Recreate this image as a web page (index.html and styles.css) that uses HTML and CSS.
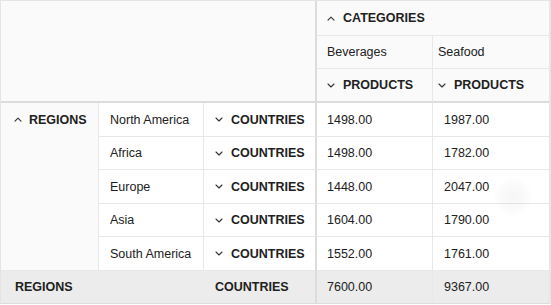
FILE: index.html
```html
<!DOCTYPE html>
<html lang="en">
<head>
<meta charset="utf-8">
<title>Pivot Grid</title>
<link rel="stylesheet" href="styles.css">
</head>
<body>
<div class="pivot">
  <div class="cell corner"></div>
  <div class="cell hdr bold c4 span2"><svg class="chev" viewBox="0 0 8 5"><polyline points="1,4.2 4,1.2 7,4.2"/></svg>CATEGORIES</div>
  <div class="cell hdr c4">Beverages</div>
  <div class="cell hdr c5">Seafood</div>
  <div class="cell hdr bold c4 thick-b"><svg class="chev" viewBox="0 0 8 5"><polyline points="1,1 4,4 7,1"/></svg>PRODUCTS</div>
  <div class="cell hdr bold c5 thick-b"><svg class="chev" viewBox="0 0 8 5"><polyline points="1,1 4,4 7,1"/></svg>PRODUCTS</div>

  <div class="cell rowhdr bold regions"><span class="rh-line"><svg class="chev" viewBox="0 0 8 5"><polyline points="1,4.2 4,1.2 7,4.2"/></svg>REGIONS</span></div>

  <div class="cell c2">North America</div>
  <div class="cell c3 bold thick-r"><svg class="chev" viewBox="0 0 8 5"><polyline points="1,1 4,4 7,1"/></svg>COUNTRIES</div>
  <div class="cell c4">1498.00</div>
  <div class="cell c5d">1987.00</div>

  <div class="cell c2">Africa</div>
  <div class="cell c3 bold thick-r"><svg class="chev" viewBox="0 0 8 5"><polyline points="1,1 4,4 7,1"/></svg>COUNTRIES</div>
  <div class="cell c4">1498.00</div>
  <div class="cell c5d">1782.00</div>

  <div class="cell c2">Europe</div>
  <div class="cell c3 bold thick-r"><svg class="chev" viewBox="0 0 8 5"><polyline points="1,1 4,4 7,1"/></svg>COUNTRIES</div>
  <div class="cell c4">1448.00</div>
  <div class="cell c5d">2047.00</div>

  <div class="cell c2">Asia</div>
  <div class="cell c3 bold thick-r"><svg class="chev" viewBox="0 0 8 5"><polyline points="1,1 4,4 7,1"/></svg>COUNTRIES</div>
  <div class="cell c4">1604.00</div>
  <div class="cell c5d">1790.00</div>

  <div class="cell c2">South America</div>
  <div class="cell c3 bold thick-r"><svg class="chev" viewBox="0 0 8 5"><polyline points="1,1 4,4 7,1"/></svg>COUNTRIES</div>
  <div class="cell c4">1552.00</div>
  <div class="cell c5d">1761.00</div>

  <div class="cell total bold span2 tot1">REGIONS</div>
  <div class="cell total bold c3 thick-r">COUNTRIES</div>
  <div class="cell total c4">7600.00</div>
  <div class="cell total c5d">9367.00</div>

  <div class="ripple"></div>
</div>
</body>
</html>
```

FILE: styles.css
```css
* { box-sizing: border-box; }

html, body {
  margin: 0;
  padding: 0;
  background: #ffffff;
}

body {
  font-family: "Liberation Sans", Arial, Helvetica, sans-serif;
  font-size: 12.5px;
  color: #212121;
}

.pivot {
  position: relative;
  width: 551px;
  display: grid;
  grid-template-columns: 98px 105px 113px 116px 116px;
  grid-template-rows: 35px 33px 34px 34px 33px 34px 33px 34px 33px;
  border-top: 1px solid #e4e4e4;
  border-left: 1px solid #e4e4e4;
  border-right: 2px solid #e6e6e6;
}

.cell {
  display: flex;
  align-items: center;
  white-space: nowrap;
  border-right: 1px solid #e8e8e8;
  border-bottom: 1px solid #e8e8e8;
  background: #ffffff;
  padding-left: 11px;
}

.bold { font-weight: bold; }

.corner {
  grid-column: span 3;
  grid-row: span 3;
  background: #fafafa;
  border-right: 2px solid #dcdcdc;
  border-bottom: 2px solid #dcdcdc;
}

.hdr { background: #fafafa; }

.span2 { grid-column: span 2; }

.thick-b { border-bottom: 2px solid #dcdcdc; }
.thick-r { border-right: 2px solid #dcdcdc; }

.c2 { padding-left: 11px; }
.c3 { padding-left: 11px; }
.c4 { padding-left: 10px; }
.c5 { padding-left: 5px; }
.c5d { padding-left: 11px; border-right: none; }

.hdr.c5 { border-right: none; }
.hdr.span2 { border-right: none; }

.regions {
  grid-row: span 5;
  background: #fafafa;
  align-items: flex-start;
  padding-left: 13px;
}

.rh-line {
  display: flex;
  align-items: center;
  height: 33px;
}

.chev {
  width: 8px;
  height: 5px;
  margin-right: 8px;
  flex: none;
  fill: none;
  stroke: #333333;
  stroke-width: 1.1;
  stroke-linecap: round;
  stroke-linejoin: round;
}

.regions .chev { margin-right: 7px; }

.total {
  background: #ececec;
  border-bottom: 1px solid #dcdcdc;
}

.tot1 {
  padding-left: 14px;
  border-right: none;
}

.ripple {
  position: absolute;
  left: 492px;
  top: 176px;
  width: 40px;
  height: 40px;
  border-radius: 50%;
  background: radial-gradient(circle, rgba(0,0,0,0.035) 0%, rgba(0,0,0,0.018) 45%, rgba(0,0,0,0) 70%);
  pointer-events: none;
}
```
